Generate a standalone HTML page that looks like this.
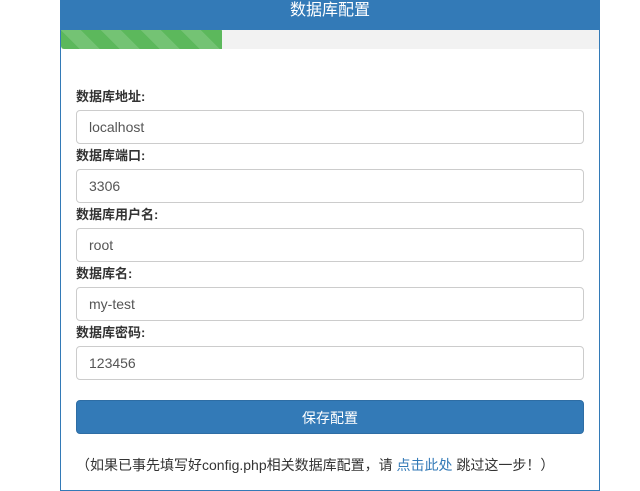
<!DOCTYPE html>
<html><head><meta charset="utf-8"><style>
body{margin:0;width:640px;height:480px;overflow:hidden;background:#fff;font-family:"Liberation Sans","Noto Sans CJK SC",sans-serif;font-size:14px;color:#333}
.panel{position:absolute;left:60px;top:0;width:538px;height:490px;border:1px solid #337ab7;border-top:none}
.hd{height:30px;background:#337ab7;color:#fff;text-align:center;font-size:16px;line-height:22px;margin:0 -1px;}
.pb{height:19px;background:#f2f2f2;position:relative}
.pg{position:absolute;left:0;top:0;height:19px;width:161px;background-color:#5cb85c;background-image:linear-gradient(45deg,rgba(255,255,255,.15) 25%,transparent 25%,transparent 50%,rgba(255,255,255,.15) 50%,rgba(255,255,255,.15) 75%,transparent 75%,transparent);background-size:40px 40px;border-radius:0 0 0 3px}
.lb{position:absolute;left:15px;font-weight:bold;font-size:13px}
.in{position:absolute;left:15px;width:494px;height:32px;border:1px solid #ccc;border-radius:4px;padding-left:12px;line-height:32px;color:#555;font-size:14px}
.btn{position:absolute;left:15px;top:400px;width:508px;height:34px;background:#337ab7;border:1px solid #2e6da4;border-radius:4px;color:#fff;text-align:center;line-height:34px;font-size:14px;box-sizing:border-box}
.ft{position:absolute;left:15px;top:455px;font-size:14px}
a{color:#337ab7;text-decoration:none}
</style></head><body>
<div class="panel">
<div class="hd">数据库配置</div>
<div class="pb"><div class="pg"></div></div>
<div class="lb" style="top:86px">数据库地址:</div><div class="in" style="top:110px">localhost</div>
<div class="lb" style="top:145px">数据库端口:</div><div class="in" style="top:169px">3306</div>
<div class="lb" style="top:204px">数据库用户名:</div><div class="in" style="top:228px">root</div>
<div class="lb" style="top:263px">数据库名:</div><div class="in" style="top:287px">my-test</div>
<div class="lb" style="top:322px">数据库密码:</div><div class="in" style="top:346px">123456</div>
<div class="btn">保存配置</div>
<div class="ft">（如果已事先填写好config.php相关数据库配置，请 <a>点击此处</a> 跳过这一步！）</div>
</div>
</body></html>
